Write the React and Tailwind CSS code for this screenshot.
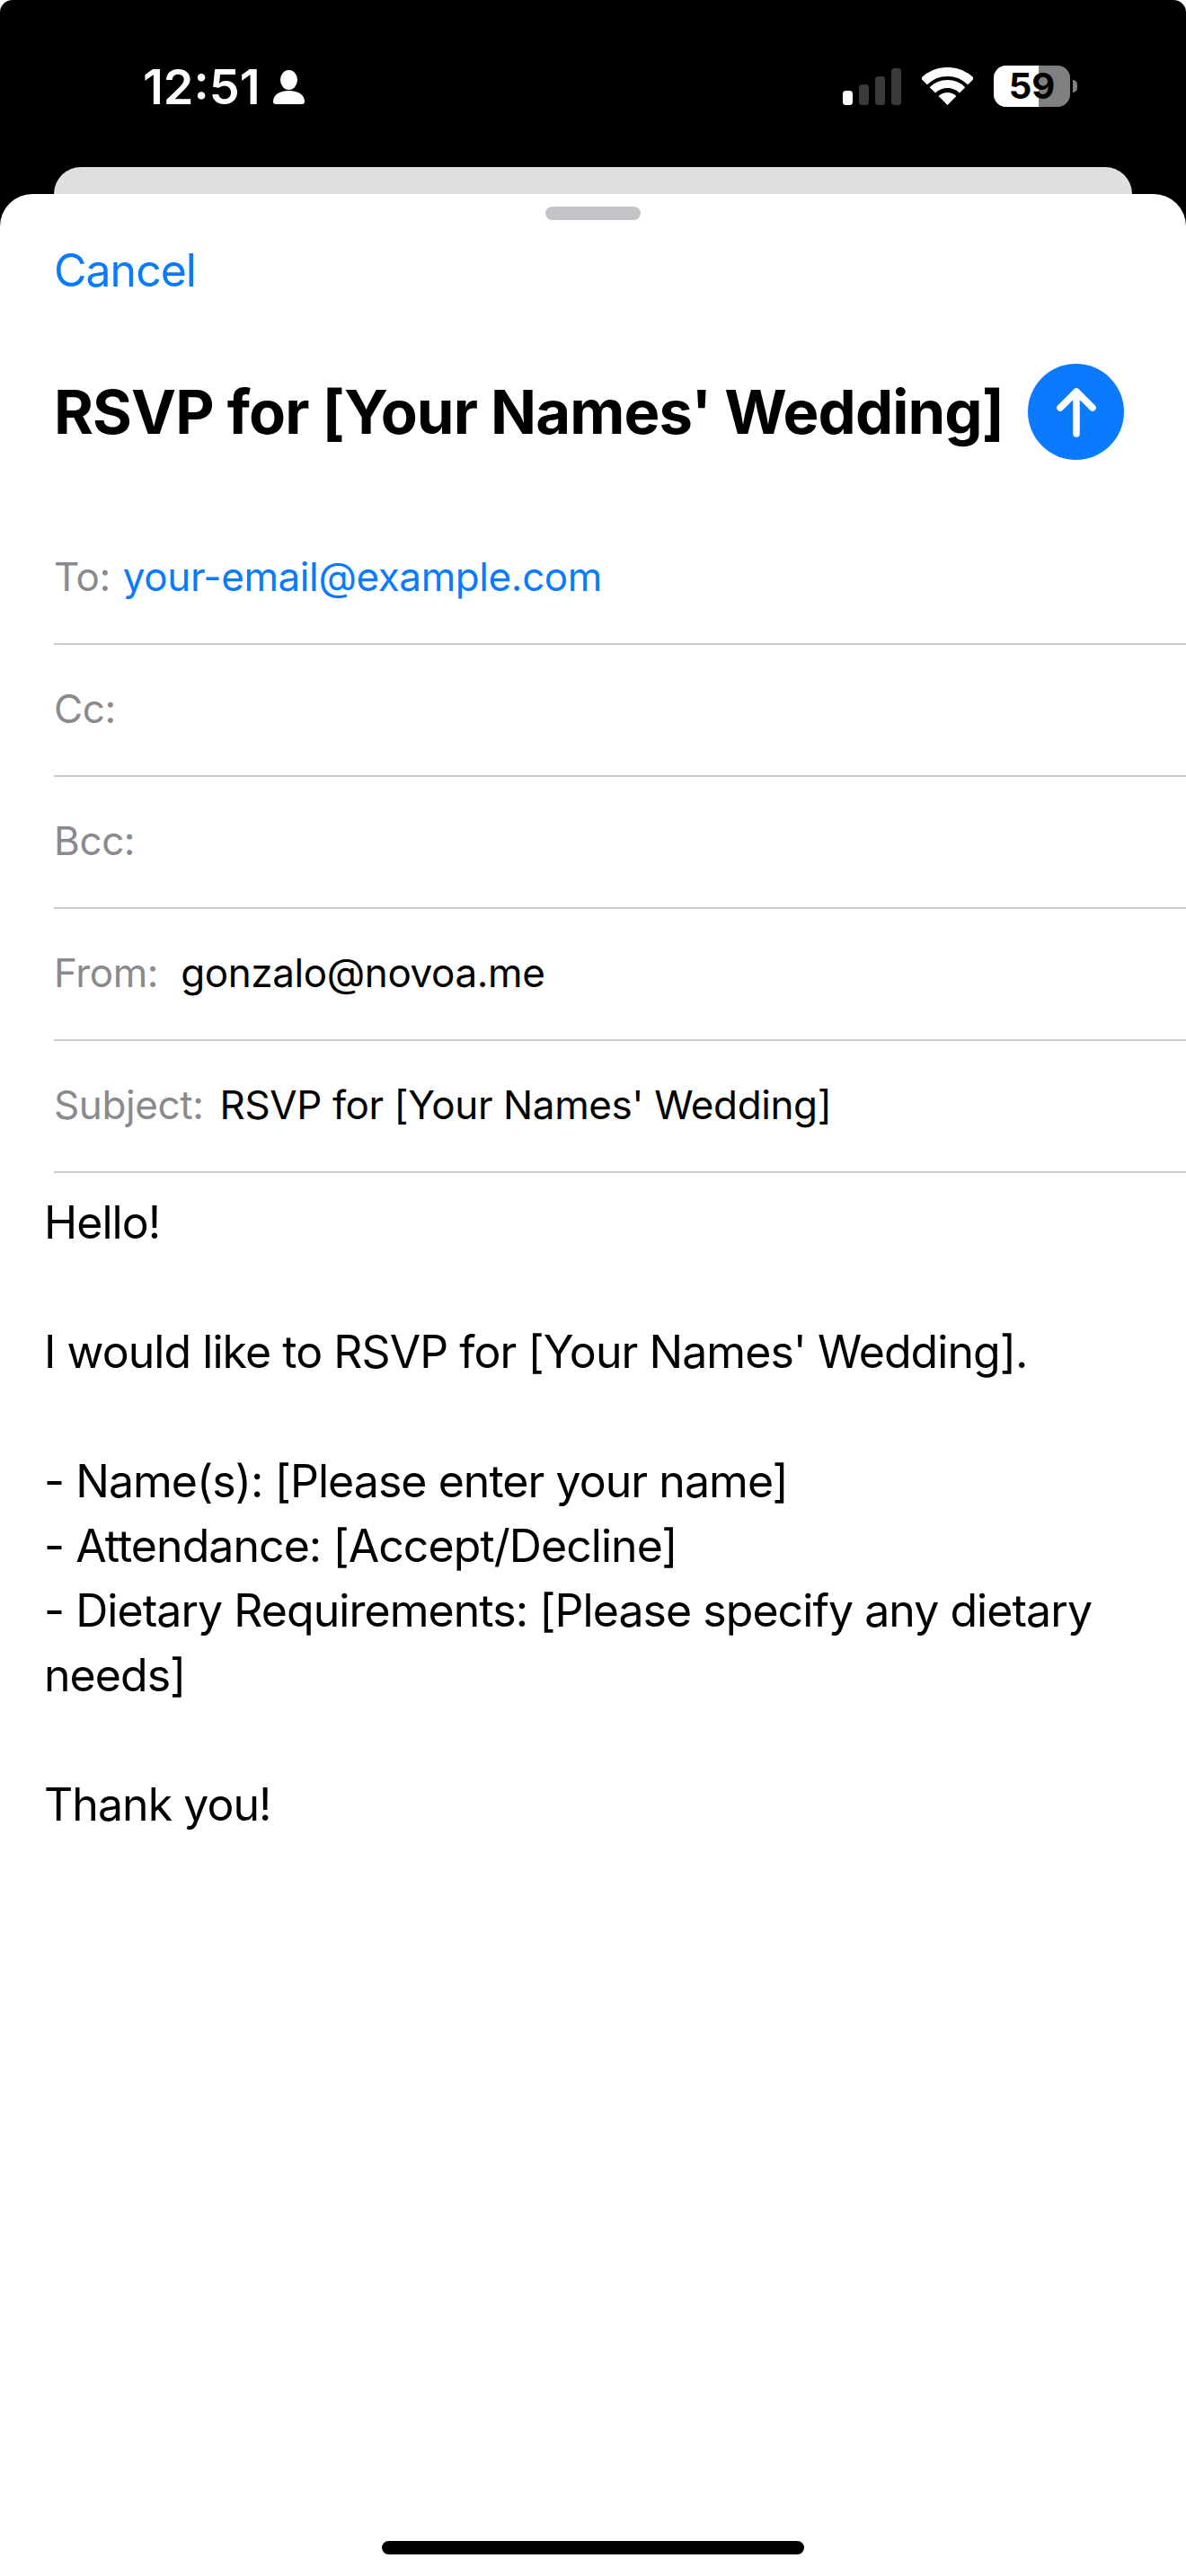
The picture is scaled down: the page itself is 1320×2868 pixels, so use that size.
import React from 'react'

const sf = "font-['Inter','Liberation_Sans',sans-serif]"

const PersonIcon = () => (
  <svg width="35" height="38" viewBox="0 0 35 38" fill="white">
    <ellipse cx="17.5" cy="11" rx="9.5" ry="11" />
    <path d="M0 35c0-8 8-12 17.5-12S35 27 35 35c0 2-1 3-3 3H3c-2 0-3-1-3-3z" />
  </svg>
)

const SignalIcon = () => (
  <svg width="65" height="41" viewBox="0 0 65 41">
    <rect x="0" y="25" width="11" height="16" rx="3.5" fill="#ffffff" />
    <rect x="18" y="18" width="11" height="23" rx="3.5" fill="#3a3a3a" />
    <rect x="36" y="9" width="11" height="32" rx="3.5" fill="#3a3a3a" />
    <rect x="54" y="0" width="11" height="41" rx="3.5" fill="#3a3a3a" />
  </svg>
)

const WifiIcon = () => (
  <svg width="57" height="42" viewBox="0 0 57 42" fill="none">
    <path d="M2.3 15.8A37 37 0 0 1 54.7 15.8" stroke="white" strokeWidth="10" />
    <path d="M11.9 25.4A23.5 23.5 0 0 1 45.1 25.4" stroke="white" strokeWidth="9" />
    <path d="M28.5 42L18.6 32.1A14 14 0 0 1 38.4 32.1Z" fill="white" />
  </svg>
)

const Battery = () => (
  <div className="flex items-center gap-[3px]">
    <div className="relative flex h-[46px] w-[85px] items-center justify-center rounded-[14px] bg-[#808080]">
      <div className="absolute inset-y-0 left-0 w-[50px] rounded-l-[14px] bg-white" />
      <span className={`relative text-[40px] leading-none font-bold text-black ${sf}`}>59</span>
    </div>
    <div className="h-[14px] w-[5px] rounded-r-full bg-[#808080]" />
  </div>
)

const FieldRow = ({ label, value, valueClass, gap }) => (
  <div className={`flex h-[147px] items-center border-b-2 border-[#cbcbcd] pb-[4px] tracking-[-0.4px] ${gap}`}>
    <span className="text-[44px] text-[#8a8a8e]">{label}</span>
    {value && <span className={`text-[44px] ${valueClass}`}>{value}</span>}
  </div>
)

export default function App() {
  return (
    <div className={`flex h-[2868px] w-[1320px] flex-col overflow-hidden rounded-t-[14px] bg-black ${sf}`}>
      {/* status bar */}
      <div className="flex h-[186px] shrink-0 items-start justify-between pt-[73px] pr-[121px] pl-[159px]">
        <div className="flex items-center gap-[14px]">
          <span className="text-[54px] leading-[48px] font-semibold text-white">12:51</span>
          <PersonIcon />
        </div>
        <div className="flex items-center gap-[23px]">
          <SignalIcon />
          <WifiIcon />
          <Battery />
        </div>
      </div>

      {/* card behind the sheet */}
      <div className="mx-[60px] h-[30px] shrink-0 rounded-t-[30px] bg-[#dfdfdf]" />

      {/* compose sheet */}
      <div className="relative flex flex-1 flex-col rounded-t-[36px] bg-white">
        <div className="mx-auto mt-[14px] h-[15px] w-[106px] rounded-full bg-[#c4c4c8]" />

        <div className="mt-[15px] pl-[60px] text-[50px] leading-[82px] tracking-[-1px] text-[#0a7aff]">Cancel</div>

        <div className="mt-[63px] flex items-center justify-between pr-[69px] pl-[60px]">
          <h1 className="text-[67px] leading-[106px] font-bold tracking-[-0.9px] whitespace-nowrap text-black">
            RSVP for [Your Names' Wedding]
          </h1>
          <div className="flex h-[107px] w-[107px] items-center justify-center rounded-full bg-[#0a7aff]">
            <svg width="44" height="56" viewBox="0 0 44 56" fill="none" stroke="white" strokeWidth="7.5" strokeLinecap="round" strokeLinejoin="round">
              <path d="M22 52V5M4 23L22 5L40 23" />
            </svg>
          </div>
        </div>

        <div className="mt-[59px] ml-[60px]">
          <FieldRow label="To:" value="your-email@example.com" valueClass="text-[#0a7aff]" gap="gap-[14px]" />
          <FieldRow label="Cc:" />
          <FieldRow label="Bcc:" />
          <FieldRow label="From:" value="gonzalo@novoa.me" valueClass="text-black" gap="gap-[25px]" />
          <FieldRow label="Subject:" value="RSVP for [Your Names' Wedding]" valueClass="text-black" gap="gap-[18px]" />
        </div>

        <div className="w-[1240px] pt-[19px] pl-[49px] text-[50px] leading-[72px] tracking-[-0.95px] text-black">
          <p>Hello!</p>
          <p className="mt-[72px]">I would like to RSVP for [Your Names' Wedding].</p>
          <p className="mt-[72px]">- Name(s): [Please enter your name]</p>
          <p>- Attendance: [Accept/Decline]</p>
          <p>- Dietary Requirements: [Please specify any dietary needs]</p>
          <p className="mt-[72px]">Thank you!</p>
        </div>

        <div className="mt-auto mb-[24px] h-[15px] w-[470px] self-center rounded-full bg-black" />
      </div>
    </div>
  )
}
